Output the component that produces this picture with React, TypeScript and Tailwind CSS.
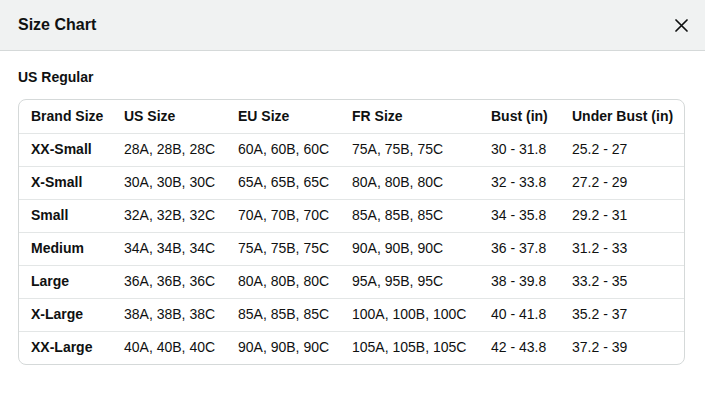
const rows = [
  ['XX-Small', '28A, 28B, 28C', '60A, 60B, 60C', '75A, 75B, 75C', '30 - 31.8', '25.2 - 27'],
  ['X-Small', '30A, 30B, 30C', '65A, 65B, 65C', '80A, 80B, 80C', '32 - 33.8', '27.2 - 29'],
  ['Small', '32A, 32B, 32C', '70A, 70B, 70C', '85A, 85B, 85C', '34 - 35.8', '29.2 - 31'],
  ['Medium', '34A, 34B, 34C', '75A, 75B, 75C', '90A, 90B, 90C', '36 - 37.8', '31.2 - 33'],
  ['Large', '36A, 36B, 36C', '80A, 80B, 80C', '95A, 95B, 95C', '38 - 39.8', '33.2 - 35'],
  ['X-Large', '38A, 38B, 38C', '85A, 85B, 85C', '100A, 100B, 100C', '40 - 41.8', '35.2 - 37'],
  ['XX-Large', '40A, 40B, 40C', '90A, 90B, 90C', '105A, 105B, 105C', '42 - 43.8', '37.2 - 39'],
];

const headers = ['Brand Size', 'US Size', 'EU Size', 'FR Size', 'Bust (in)', 'Under Bust (in)'];
const widths = ['w-[93px]', 'w-[114px]', 'w-[114px]', 'w-[139px]', 'w-[81px]', 'w-[126px]'];

export default function App() {
  return (
    <div className="w-[705px] h-[402px] bg-white text-[#0f1111] font-['Liberation_Sans',Arial,sans-serif]">
      <div className="h-[51px] bg-[#f0f2f2] border-b border-[#d5d9d9] flex items-center justify-between pl-[18px] pr-[17px]">
        <h1 className="text-[16px] font-bold">Size Chart</h1>
        <svg width="13" height="13" viewBox="0 0 13 13">
          <path d="M1 1L12 12M12 1L1 12" stroke="#0f1111" strokeWidth="1.7" strokeLinecap="round" />
        </svg>
      </div>
      <div className="px-[18px] pt-[17px]">
        <h2 className="text-[14px] font-bold leading-[18px] mb-[13px]">US Regular</h2>
        <div className="w-[667px] border border-[#d5d9d9] rounded-[8px] overflow-hidden">
          <table className="w-full border-collapse text-[14px] table-fixed">
            <thead>
              <tr className="h-[33px]">
                {headers.map((h, i) => (
                  <th key={h} className={`${widths[i]} text-left font-bold pl-3 pr-1 align-middle`}>{h}</th>
                ))}
              </tr>
            </thead>
            <tbody>
              {rows.map((r) => (
                <tr key={r[0]} className="h-[33px] border-t border-[#e3e6e6]">
                  {r.map((c, i) => (
                    <td key={i} className={`pl-3 pr-1 align-middle whitespace-nowrap ${i === 0 ? 'font-bold' : ''}`}>{c}</td>
                  ))}
                </tr>
              ))}
            </tbody>
          </table>
        </div>
      </div>
    </div>
  );
}
